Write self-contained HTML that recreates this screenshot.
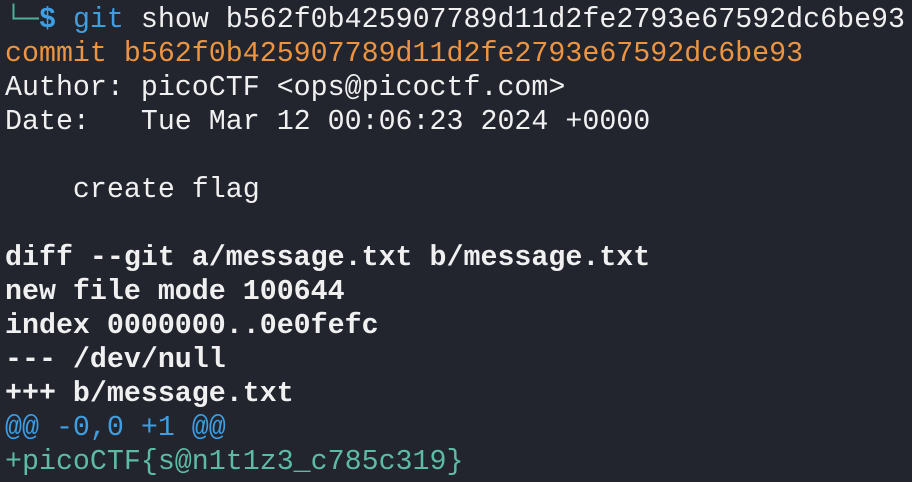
<!DOCTYPE html>
<html><head><meta charset="utf-8"><style>
html,body{margin:0;padding:0;}
body{width:912px;height:482px;overflow:hidden;background:#22252e;}
pre{margin:0;position:absolute;left:5px;top:3px;font-family:"Liberation Mono","DejaVu Sans Mono",monospace;font-size:28.3px;line-height:34px;color:#f0f0f0;}
.o{color:#ec9440}.b{color:#3d9ee4}.g{color:#5dbba4}.t{color:#4fae9a}.w{font-weight:bold}
</style></head><body>
<pre><span class="t">└─</span><span class="b w">$</span> <span class="b">git</span> show b562f0b425907789d11d2fe2793e67592dc6be93
<span class="o">commit b562f0b425907789d11d2fe2793e67592dc6be93</span>
Author: picoCTF &lt;ops@picoctf.com&gt;
Date:   Tue Mar 12 00:06:23 2024 +0000

    create flag

<span class="w">diff --git a/message.txt b/message.txt</span>
<span class="w">new file mode 100644</span>
<span class="w">index 0000000..0e0fefc</span>
<span class="w">--- /dev/null</span>
<span class="w">+++ b/message.txt</span>
<span class="b">@@ -0,0 +1 @@</span>
<span class="g">+picoCTF{s@n1t1z3_c785c319}</span></pre>
</body></html>
